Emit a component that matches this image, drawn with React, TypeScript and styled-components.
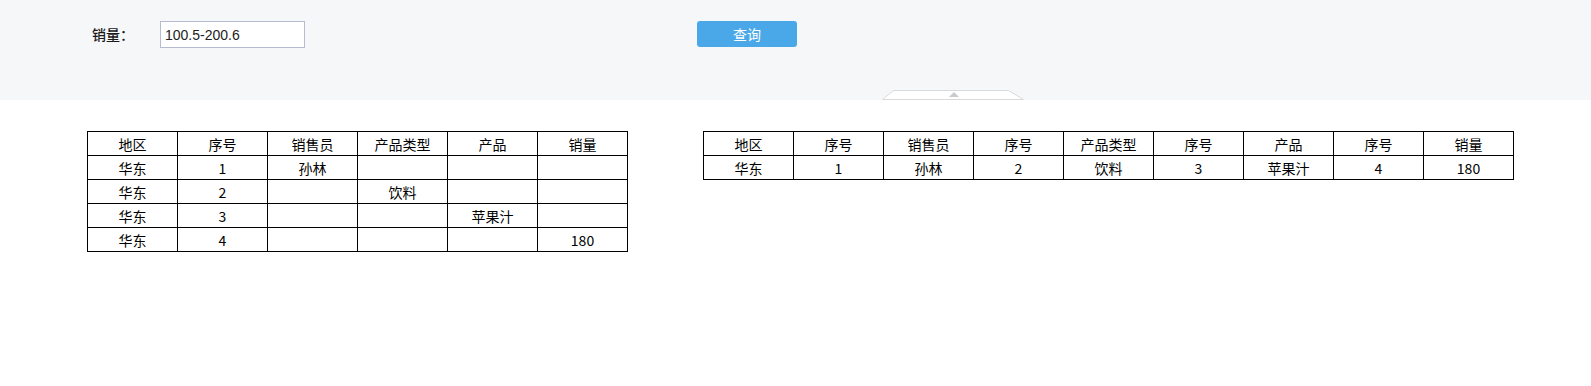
import React, { FunctionComponent } from 'react';
import styled, { createGlobalStyle } from 'styled-components';

const GlobalStyle = createGlobalStyle`
  html, body {
    margin: 0;
    padding: 0;
    background: #ffffff;
    font-family: 'Noto Sans CJK SC', 'Liberation Sans', sans-serif;
  }
`;

const Page = styled.div`
  width: 1591px;
  min-height: 386px;
  background: #ffffff;
`;

const FilterPanel = styled.div`
  position: relative;
  height: 100px;
  background: #f6f7f9;
  display: flex;
  align-items: flex-start;
  padding: 21px 0 0 92px;
  box-sizing: border-box;
`;

const FieldLabel = styled.label`
  width: 68px;
  height: 27px;
  line-height: 26px;
  font-size: 14px;
  font-weight: 500;
  color: #1a1a1a;
`;

const FieldInput = styled.input`
  width: 145px;
  height: 27px;
  box-sizing: border-box;
  border: 1px solid #b6bccf;
  background: #ffffff;
  padding: 0 4px;
  font-family: 'Liberation Sans', Arial, sans-serif;
  font-size: 14px;
  color: #222222;
  outline: none;
`;

const QueryButton = styled.button`
  margin-left: 392px;
  width: 100px;
  height: 26px;
  border: none;
  border-radius: 3px;
  background: #4ba8e8;
  color: #ffffff;
  font-family: 'Noto Sans CJK SC', sans-serif;
  font-size: 14px;
  line-height: 26px;
  padding: 0;
  cursor: pointer;
`;

const CollapseHandle = styled.div`
  position: absolute;
  left: 882px;
  bottom: 0;
  width: 142px;
  height: 10px;
  line-height: 0;
`;

const Tables = styled.div`
  display: flex;
  align-items: flex-start;
  gap: 75px;
  padding: 31px 0 0 87px;
`;

const Grid = styled.table<{ $cols: number }>`
  border-collapse: collapse;
  table-layout: fixed;
  width: ${(p) => p.$cols * 90 + 1}px;
  font-family: 'Noto Sans CJK SC', 'Liberation Sans', sans-serif;
  font-size: 14px;
  color: #000000;
`;

const Cell = styled.td`
  border: 1px solid #000000;
  height: 23px;
  padding: 0;
  text-align: center;
  vertical-align: middle;
  line-height: 22px;
`;

interface IGridProps {
  rows: string[][];
}

const DataGrid: FunctionComponent<IGridProps> = ({ rows }: IGridProps) => {
  const cols = rows[0].length;
  return (
    <Grid $cols={cols}>
      <tbody>
        {rows.map((row, i) => (
          <tr key={i}>
            {row.map((v, j) => (
              <Cell key={j}>{v}</Cell>
            ))}
          </tr>
        ))}
      </tbody>
    </Grid>
  );
};

const leftRows = [
  ['地区', '序号', '销售员', '产品类型', '产品', '销量'],
  ['华东', '1', '孙林', '', '', ''],
  ['华东', '2', '', '饮料', '', ''],
  ['华东', '3', '', '', '苹果汁', ''],
  ['华东', '4', '', '', '', '180'],
];

const rightRows = [
  ['地区', '序号', '销售员', '序号', '产品类型', '序号', '产品', '序号', '销量'],
  ['华东', '1', '孙林', '2', '饮料', '3', '苹果汁', '4', '180'],
];

const App: FunctionComponent = () => {
  return (
    <>
      <GlobalStyle />
      <Page>
        <FilterPanel>
          <FieldLabel>销量：</FieldLabel>
          <FieldInput defaultValue="100.5-200.6" />
          <QueryButton>查询</QueryButton>
          <CollapseHandle>
            <svg width="142" height="10" viewBox="0 0 142 10">
              <path d="M11.5 0.5 H126.5 L141.5 9.5 H0.5 Z" fill="#ffffff" stroke="#d9dadc" />
              <path d="M67 7 L72 2 L77 7 Z" fill="#c9cbce" />
            </svg>
          </CollapseHandle>
        </FilterPanel>
        <Tables>
          <DataGrid rows={leftRows} />
          <DataGrid rows={rightRows} />
        </Tables>
      </Page>
    </>
  );
};

export default App;
